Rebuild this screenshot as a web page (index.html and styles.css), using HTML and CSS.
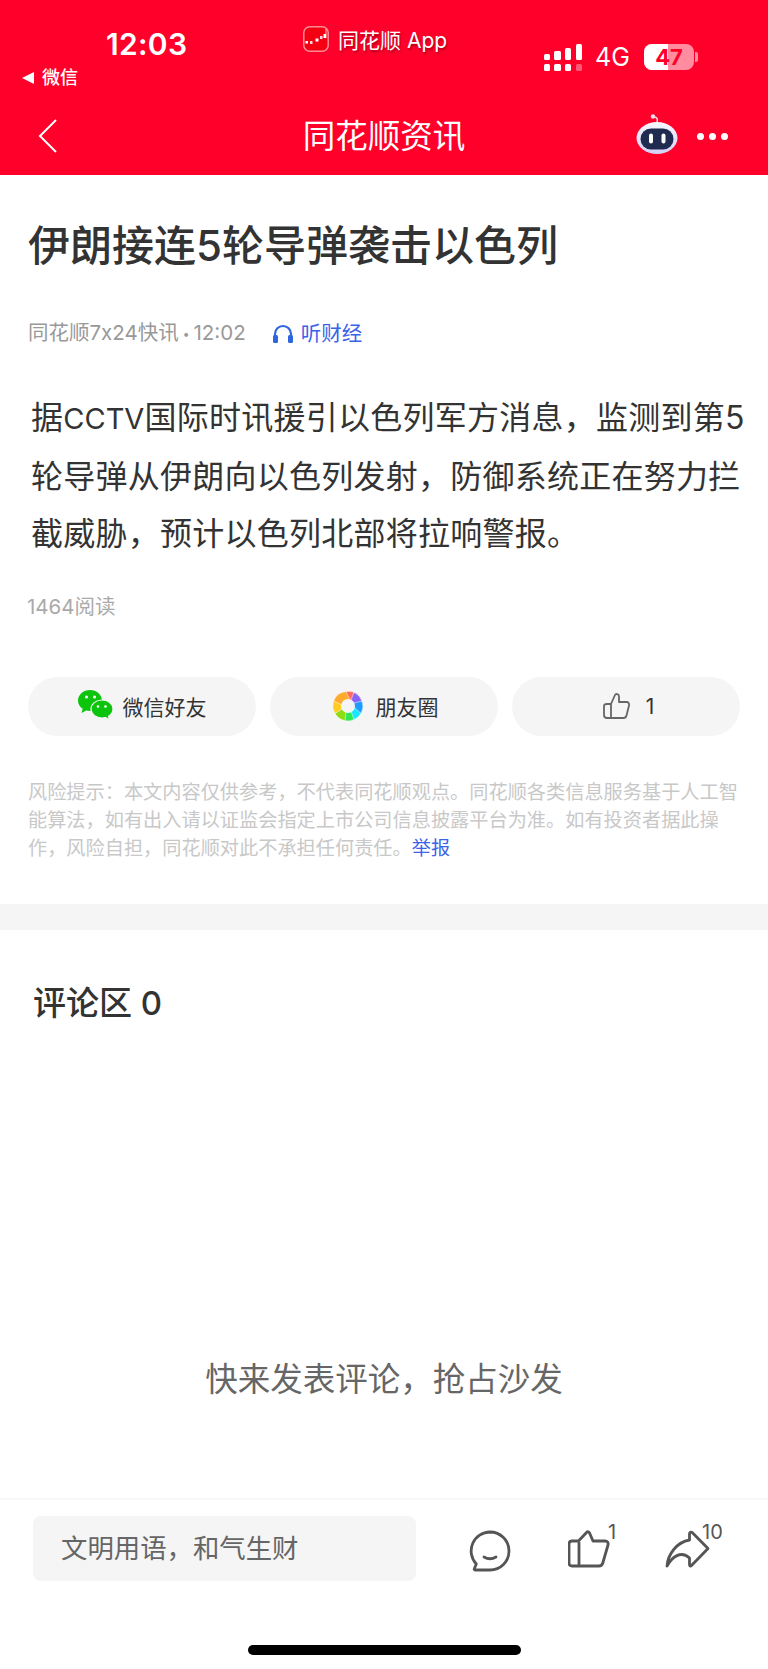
FILE: index.html
```html
<!DOCTYPE html>
<html lang="zh-CN">
<head>
  <meta charset="UTF-8" />
  <meta name="viewport" content="width=device-width, initial-scale=1.0"/>
  <title>同花顺资讯</title>
  <link rel="stylesheet" href="styles.css">
</head>
<body>
  <div class="page">
    <header class="top">
      <div class="status">
        <div class="status-left">
          <div class="time">12:03</div>
          <div class="back-app"><span class="tri"></span>微信</div>
        </div>
        <div class="status-app">
          <svg class="app-logo" width="26" height="26" viewBox="0 0 26 26">
            <rect x="0.8" y="0.8" width="24.400" height="24.400" rx="6" fill="#f50012" stroke="#ff8a96" stroke-width="1.500"/>
            <path d="M23 3v9" stroke="#ffc4ca" stroke-width="1"/>
            <rect x="2.500" y="15" width="2.500" height="2.500" fill="#fff"/>
            <rect x="7" y="15" width="2.500" height="3" fill="#ffd6da"/>
            <rect x="12.500" y="12.500" width="3" height="3" fill="#fff"/>
            <rect x="17" y="10" width="2.500" height="3" fill="#ffd6da"/>
            <rect x="20.500" y="8" width="2.500" height="4" fill="#fff"/>
          </svg>
          <span>同花顺 App</span>
        </div>
        <div class="status-right">
          <svg class="signal" width="38" height="27" viewBox="0 0 38 27">
            <g fill="#fff">
              <rect x="0" y="10" width="6" height="6" rx="1.5"/>
              <rect x="0" y="20" width="6" height="7" rx="1.5"/>
              <rect x="10" y="7" width="7" height="9" rx="1.5"/>
              <rect x="10" y="20" width="7" height="7" rx="1.5"/>
              <rect x="21" y="4" width="6" height="12" rx="1.5"/>
              <rect x="21" y="20" width="6" height="7" rx="1.5"/>
              <rect x="32" y="0" width="6" height="16" rx="1.5"/>
              <rect x="32" y="20" width="6" height="7" rx="1.5" opacity="0.35"/>
            </g>
          </svg>
          <span class="net">4G</span>
          <div class="battery">
            <div class="battery-fill"></div>
            <span class="battery-num">47</span>
          </div>
          <span class="battery-cap"></span>
        </div>
      </div>
      <div class="nav">
        <svg class="nav-back" width="20" height="36" viewBox="0 0 20 36">
          <path d="M18 2L2 18l16 16" fill="none" stroke="#fff" stroke-width="2"/>
        </svg>
        <div class="nav-title">同花顺资讯</div>
        <div class="nav-right">
          <svg width="42" height="40" viewBox="0 0 42 40">
            <defs>
              <linearGradient id="shell" x1="0" y1="0" x2="0" y2="1">
                <stop offset="0" stop-color="#f8f8ff"/>
                <stop offset="1" stop-color="#d5cff5"/>
              </linearGradient>
            </defs>
            <path d="M21 8c1-3 0-5-3-5" fill="none" stroke="#f5dbe6" stroke-width="1.500"/>
            <circle cx="17" cy="2.500" r="2.200" fill="#f5dbe6"/>
            <ellipse cx="21" cy="24" rx="20.500" ry="16" fill="url(#shell)"/>
            <rect x="4.500" y="14.500" width="33" height="21" rx="10.500" fill="#1f2c4f"/>
            <rect x="13" y="19.500" width="4" height="10" rx="2" fill="#fff"/>
            <rect x="25.500" y="19.500" width="4" height="10" rx="2" fill="#fff"/>
          </svg>
          <div class="dots"><i></i><i></i><i></i></div>
        </div>
      </div>
    </header>

    <article class="article">
      <h1 class="title">伊朗接连5轮导弹袭击以色列</h1>
      <div class="meta">
        <span class="source">同花顺7x24快讯<span class="sep">•</span>12:02</span>
        <span class="listen">
          <svg width="22" height="20" viewBox="0 0 22 20">
            <path d="M3 16V10a8 8 0 0 1 16 0v6" fill="none" stroke="#2f66e0" stroke-width="2.2"/>
            <rect x="1" y="11" width="5" height="8" rx="1.5" fill="#2f66e0"/>
            <rect x="16" y="11" width="5" height="8" rx="1.5" fill="#2f66e0"/>
          </svg>
          听财经
        </span>
      </div>
      <p class="body-text">据<span class="latin">CCTV</span>国际时讯援引以色列军方消息，监测到第5轮导弹从伊朗向以色列发射，防御系统正在努力拦截威胁，预计以色列北部将拉响警报。</p>
      <div class="reads">1464阅读</div>
      <div class="actions">
        <div class="action">
          <svg width="35" height="32" viewBox="0 0 35 32">
            <path d="M12 0C5.400 0 0 4.700 0 10.500c0 3.400 1.800 6.300 4.700 8.300L3.500 23l4.700-2.500c1.200.3 2.500.5 3.800.5 6.600 0 12-4.700 12-10.500S18.600 0 12 0z" fill="#0cc40c"/>
            <path d="M24 10c-6 0-11 4-11 9s5 9 11 9c1.200 0 2.300-.2 3.400-.5l4.100 2.500-1-3.700c2.800-1.700 4.500-4.300 4.500-7.300 0-5-5-9-11-9z" fill="#0cc40c" stroke="#f5f5f5" stroke-width="1.200"/>
            <circle cx="8.500" cy="7" r="1.500" fill="#fff"/>
            <circle cx="16.500" cy="7" r="1.500" fill="#fff"/>
            <circle cx="20" cy="16.500" r="1.300" fill="#fff"/>
            <circle cx="27.500" cy="16.500" r="1.300" fill="#fff"/>
          </svg>
          <span>微信好友</span>
        </div>
        <div class="action action-moments">
          <svg width="30" height="30" viewBox="-15 -15 30 30">
            <g stroke="#fff" stroke-width="0.500">
              <path d="M-5-4L-2-14.500A15 15 0 0 1 6-13.700L5-5z" fill="#ff6b5e"/>
              <path d="M3-6L6-13.700A15 15 0 0 1 14-5L7 1z" fill="#8a63f5"/>
              <path d="M6-3L14-5A15 15 0 0 1 13 7.500L5 3z" fill="#1c9cff"/>
              <path d="M6 1L13 7.500A15 15 0 0 1 6 13.700L1 6z" fill="#19e7ff"/>
              <path d="M3 5L6 13.700A15 15 0 0 1-3 14.700L-5 5z" fill="#2ee85a"/>
              <path d="M-2 6L-3 14.700A15 15 0 0 1-13 7.500L-6 2z" fill="#8fdc14"/>
              <path d="M-6 3L-13 7.500A15 15 0 0 1-14.500-5L-6-4z" fill="#ffcc1f"/>
              <path d="M-6-1L-14.500-5A15 15 0 0 1-2-14.500L2-6z" fill="#ffab2e"/>
            </g>
            <circle r="7" fill="#f5f5f5"/>
          </svg>
          <span>朋友圈</span>
        </div>
        <div class="action action-like">
          <svg width="28" height="28" viewBox="0 0 28 28">
            <path d="M8 12V26M8 12l4-9c.7-1.500 4-1.500 4 1.500V10h7.500c2 0 3 1.500 2.500 3.500l-2.500 10c-.4 1.700-1.500 2.500-3 2.500H4c-1.700 0-3-1-3-3v-9c0-1.500 1.300-2 3-2h4z" fill="none" stroke="#666" stroke-width="1.800" stroke-linejoin="round"/>
          </svg>
          <span>1</span>
        </div>
      </div>
      <p class="risk">风险提示：本文内容仅供参考，不代表同花顺观点。同花顺各类信息服务基于人工智能算法，如有出入请以证监会指定上市公司信息披露平台为准。如有投资者据此操作，风险自担，同花顺对此不承担任何责任。<a class="report">举报</a></p>
    </article>

    <div class="divider"></div>

    <section class="comments">
      <h2 class="comments-title">评论区 0</h2>
      <div class="comments-empty">快来发表评论，抢占沙发</div>
    </section>

    <footer class="bottom">
      <div class="input">文明用语，和气生财</div>
      <div class="tool tool-comment">
        <svg width="42" height="42" viewBox="0 0 42 42">
          <path d="M21 2a19 19 0 1 1 0 38H6c-.6 0-1-.6-.7-1.200l2-4.800A19 19 0 0 1 21 2z" fill="none" stroke="#555" stroke-width="2.800" stroke-linejoin="round"/>
          <path d="M15 27c3.500 2 8.500 2 12 0" fill="none" stroke="#555" stroke-width="2.800" stroke-linecap="round"/>
        </svg>
      </div>
      <div class="tool tool-like">
        <svg width="42" height="38" viewBox="0 0 42 38">
          <path d="M10.500 11H4c-1.700 0-3 1.300-3 3v19c0 1.700 1.300 3 3 3h27c2 0 3.200-1 3.800-3L40 15c.6-2.200-.5-4-3-4H25l-3-7c-.5-1.400-2-3-3-2l-8.500 9zM11 12v24" fill="none" stroke="#555" stroke-width="2.800" stroke-linejoin="round"/>
        </svg>
        <span class="count">1</span>
      </div>
      <div class="tool tool-share">
        <svg width="45" height="38" viewBox="0 0 45 38">
          <path d="M2 36C3 24 12 12 24.500 10V4c0-1.500 1.500-2.500 2.700-1.500L43 18.500 26.500 35.500c-1 1-2 .5-2-1V28C16 20 7 27 2 36z" fill="none" stroke="#555" stroke-width="2.800" stroke-linejoin="round"/>
        </svg>
        <span class="count">10</span>
      </div>
    </footer>

    <div class="home-row"><div class="home-bar"></div></div>
  </div>
</body>
</html>
```

FILE: styles.css
```css
* { box-sizing: border-box; }
html, body { margin: 0; padding: 0; background: #fff; }
body { font-family: Inter, "Noto Sans CJK SC", sans-serif; color: #333; }
.page { width: 768px; height: 1669px; display: flex; flex-direction: column; overflow: hidden; }

/* red header */
.top { height: 175px; background: #ff002b; color: #fff; flex: none; }
.status { height: 100px; position: relative; display: flex; justify-content: space-between; }
.status-left { padding: 24px 0 0 22px; }
.time { font-size: 30px; font-weight: 600; line-height: 40px; margin-left: 84px; letter-spacing: 0.3px; }
.back-app { display: flex; align-items: center; font-size: 18px; line-height: 24px; margin-top: 2px; font-weight: 500; }
.tri { width: 0; height: 0; border: 6px solid transparent; border-right: 12px solid #fff; border-left: 0; margin-right: 8px; }
.status-app { display: flex; align-items: center; gap: 9px; height: 30px; margin-top: 24px; font-size: 21px; text-shadow: 1px 2px 2px rgba(120, 0, 20, 0.6); position: absolute; left: 303px; }
.status-right { display: flex; align-items: center; height: 30px; margin: 42px 70px 0 0; }
.net { font-size: 25px; margin: 0 0 0 13px; width: 49px; }
.battery { width: 50px; height: 26px; border-radius: 8px; background: rgba(255, 255, 255, 0.55); position: relative; overflow: hidden; }
.battery-fill { width: 47%; height: 100%; background: #fff; }
.battery-num { position: absolute; left: 0; right: 0; top: 0; text-align: center; font-size: 22px; line-height: 26px; font-weight: 700; color: #ff002b; }
.battery-cap { width: 3px; height: 10px; background: rgba(255, 255, 255, 0.55); border-radius: 0 2px 2px 0; margin-left: 1px; }

.nav { height: 75px; position: relative; display: flex; align-items: center; justify-content: space-between; padding: 0 40px 8px 38px; }
.nav-back { margin-top: 4px; }
.nav-title { position: absolute; left: 0; right: 0; top: 15px; text-align: center; font-size: 32.500px; line-height: 44px; }
.nav-right { display: flex; align-items: center; gap: 19px; }
.dots { display: flex; gap: 5px; margin-top: 6px; }
.dots i { width: 7px; height: 7px; border-radius: 50%; background: #fff; }

/* article */
.article { padding: 0 28px; flex: none; }
.title { margin: 41px 0 0; font-size: 42px; line-height: 60px; font-weight: 500; color: #333; }
.meta { display: flex; align-items: center; margin-top: 43px; font-size: 20.500px; line-height: 28px; color: #999; }
.sep { font-size: 12px; margin: 0 4px; vertical-align: 2px; }
.listen { display: flex; align-items: center; gap: 7px; margin-left: 26px; color: #3b63e8; }
.body-text { margin: 41px -8px 0 3px; font-size: 32px; line-height: 57.500px; letter-spacing: 0.250px; color: #333; }
.latin { font-size: 29px; letter-spacing: 0; }
.reads { margin: 30px 0 0 -1px; font-size: 20.500px; line-height: 28px; color: #aaa; }
.actions { display: flex; gap: 14px; margin-top: 56px; }
.action { width: 228px; height: 59px; border-radius: 30px; background: #f5f5f5; display: flex; align-items: center; justify-content: center; gap: 10px; font-size: 21px; color: #333; }
.action-moments { gap: 13px; padding-left: 3px; }
.action-like { gap: 15px; padding-left: 5px; }
.risk { margin: 42px 0 0; font-size: 19.200px; line-height: 28px; color: #c8c8c8; }
.report { color: #3b63e8; }

.divider { height: 26px; background: #f5f5f5; flex: none; margin-top: 42px; }

/* comments */
.comments { flex: 1; padding: 50px 33px 0; }
.comments-title { margin: 0; font-size: 33px; line-height: 46px; font-weight: 500; color: #333; }
.comments-empty { margin: 331px -33px 0; text-align: center; font-size: 32.500px; line-height: 46px; color: #666; }

/* bottom bar */
.bottom { height: 121px; border-top: 2px solid #f7f7f7; flex: none; padding: 16px 0 0 33px; display: flex; align-items: flex-start; }
.input { width: 383px; height: 65px; background: #f5f5f5; border-radius: 8px; font-size: 26.400px; line-height: 65px; padding-left: 28px; color: #666; }
.tool { position: relative; margin-top: 14px; }
.tool-comment { margin-left: 53px; }
.tool-like { margin-left: 57px; }
.tool-share { margin-left: 55px; }
.count { position: absolute; top: -10px; left: 100%; font-size: 20px; line-height: 24px; color: #555; margin-left: -2px; }
.tool-share .count { margin-left: -8px; }

.home-row { height: 50px; flex: none; padding-top: 26px; display: flex; justify-content: center; }
.home-bar { width: 273px; height: 10px; background: #000; border-radius: 5px; }
```
